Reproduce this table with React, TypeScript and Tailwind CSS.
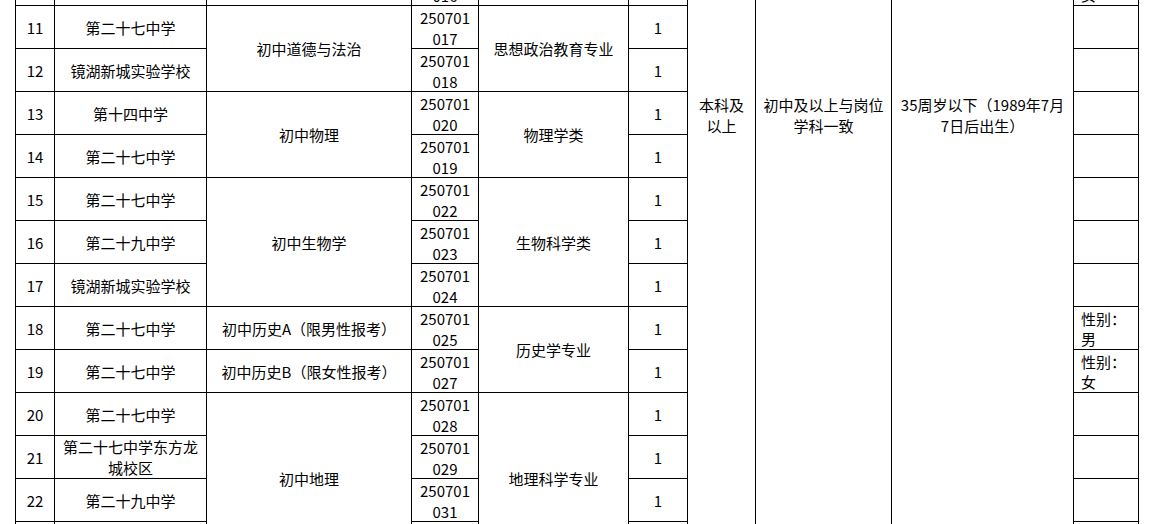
import React from "react";

type CellProps = { className?: string; children?: React.ReactNode };

function Cell({ className = "", children }: CellProps) {
  return (
    <div className={`bg-white flex flex-col items-center justify-center text-center leading-[21px] ${className}`}>
      {children}
    </div>
  );
}

function Code({ a, b }: { a: string; b: string }) {
  return (
    <Cell className="pt-[2px]">
      <span>{a}</span>
      <span>{b}</span>
    </Cell>
  );
}

function Remark({ a, b }: { a?: string; b?: string }) {
  return (
    <div className="bg-white flex flex-col justify-center items-start pl-[7px] pt-[2px] leading-[20px]">
      {a ? <span>{a}</span> : null}
      {b ? <span>{b}</span> : null}
    </div>
  );
}

export default function App() {
  return (
    <div className="h-[524px] w-[1158px] overflow-hidden bg-white text-black text-[15px] font-['Noto_Sans_CJK_SC','Noto_Sans',sans-serif]">
      <div className="ml-[15px] mt-[-38px] w-[1124px] grid grid-cols-[38px_151px_204px_66px_149px_58px_67px_135px_181px_64px] grid-rows-[repeat(14,42px)] gap-px p-px bg-black">
        {/* row 10 (only its lower edge shows) */}
        <Cell />
        <Cell />
        <Cell />
        <Code a="250701" b="016" />
        <Cell />
        <Cell />
        <div className="bg-white row-span-14 flex flex-col items-center justify-start text-center leading-[21px] pt-[131px]">
          <span>本科及</span>
          <span>以上</span>
        </div>
        <div className="bg-white row-span-14 flex flex-col items-center justify-start text-center leading-[21px] pt-[131px]">
          <span>初中及以上与岗位</span>
          <span>学科一致</span>
        </div>
        <div className="bg-white row-span-14 flex flex-col items-center justify-start text-center leading-[21px] pt-[131px]">
          <span>35周岁以下（1989年7月</span>
          <span>7日后出生）</span>
        </div>
        <Remark a="性别：" b="女" />

        {/* row 11 */}
        <Cell>11</Cell>
        <Cell>第二十七中学</Cell>
        <Cell className="row-span-2">初中道德与法治</Cell>
        <Code a="250701" b="017" />
        <Cell className="row-span-2">思想政治教育专业</Cell>
        <Cell>1</Cell>
        <Remark />

        {/* row 12 */}
        <Cell>12</Cell>
        <Cell>镜湖新城实验学校</Cell>
        <Code a="250701" b="018" />
        <Cell>1</Cell>
        <Remark />

        {/* row 13 */}
        <Cell>13</Cell>
        <Cell>第十四中学</Cell>
        <Cell className="row-span-2">初中物理</Cell>
        <Code a="250701" b="020" />
        <Cell className="row-span-2">物理学类</Cell>
        <Cell>1</Cell>
        <Remark />

        {/* row 14 */}
        <Cell>14</Cell>
        <Cell>第二十七中学</Cell>
        <Code a="250701" b="019" />
        <Cell>1</Cell>
        <Remark />

        {/* row 15 */}
        <Cell>15</Cell>
        <Cell>第二十七中学</Cell>
        <Cell className="row-span-3">初中生物学</Cell>
        <Code a="250701" b="022" />
        <Cell className="row-span-3">生物科学类</Cell>
        <Cell>1</Cell>
        <Remark />

        {/* row 16 */}
        <Cell>16</Cell>
        <Cell>第二十九中学</Cell>
        <Code a="250701" b="023" />
        <Cell>1</Cell>
        <Remark />

        {/* row 17 */}
        <Cell>17</Cell>
        <Cell>镜湖新城实验学校</Cell>
        <Code a="250701" b="024" />
        <Cell>1</Cell>
        <Remark />

        {/* row 18 */}
        <Cell>18</Cell>
        <Cell>第二十七中学</Cell>
        <Cell>初中历史A（限男性报考）</Cell>
        <Code a="250701" b="025" />
        <Cell className="row-span-2">历史学专业</Cell>
        <Cell>1</Cell>
        <Remark a="性别：" b="男" />

        {/* row 19 */}
        <Cell>19</Cell>
        <Cell>第二十七中学</Cell>
        <Cell>初中历史B（限女性报考）</Cell>
        <Code a="250701" b="027" />
        <Cell>1</Cell>
        <Remark a="性别：" b="女" />

        {/* row 20 */}
        <Cell>20</Cell>
        <Cell>第二十七中学</Cell>
        <Cell className="row-span-4">初中地理</Cell>
        <Code a="250701" b="028" />
        <Cell className="row-span-4">地理科学专业</Cell>
        <Cell>1</Cell>
        <Remark />

        {/* row 21 */}
        <Cell>21</Cell>
        <Cell>
          <span>第二十七中学东方龙</span>
          <span>城校区</span>
        </Cell>
        <Code a="250701" b="029" />
        <Cell>1</Cell>
        <Remark />

        {/* row 22 */}
        <Cell>22</Cell>
        <Cell>第二十九中学</Cell>
        <Code a="250701" b="031" />
        <Cell>1</Cell>
        <Remark />

        {/* row 23 (only its top edge shows) */}
        <Cell />
        <Cell />
        <Cell />
        <Cell />
        <Remark />
      </div>
    </div>
  );
}
